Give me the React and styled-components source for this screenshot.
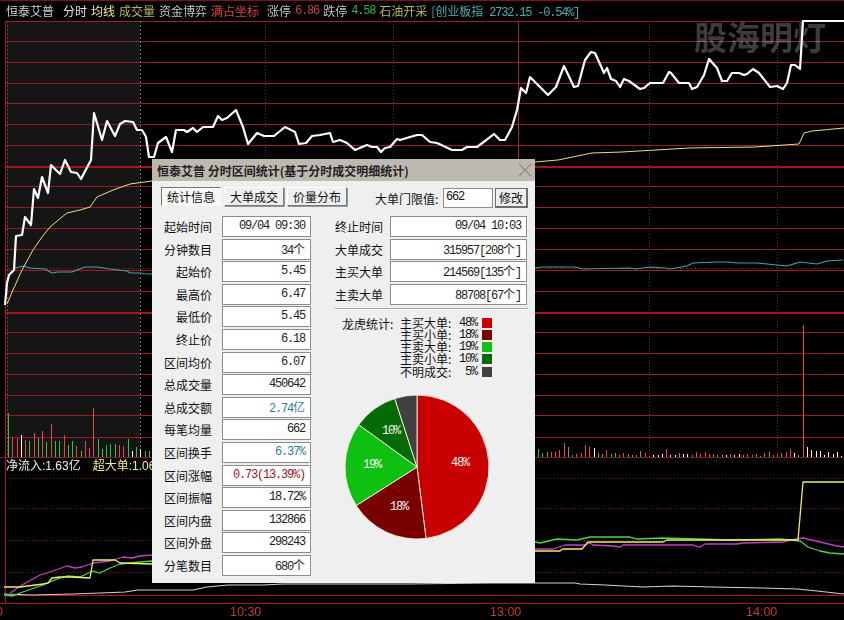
import React from 'react';
import styled, { createGlobalStyle } from 'styled-components';

const CJK = `"Noto Sans CJK SC", "Liberation Sans", sans-serif`;
const MONO = `"Liberation Mono", "Noto Sans CJK SC", monospace`;

const GlobalStyle = createGlobalStyle`
  html, body {
    margin: 0;
    background: #000;
    overflow: hidden;
  }
`;

const Screen = styled.div`
  position: relative;
  width: 844px;
  height: 620px;
  background: #000;
  font-family: ${CJK};
  font-size: 12px;
  overflow: hidden;
`;

const TopBar = styled.div`
  display: flex;
  align-items: center;
  gap: 4px;
  height: 19px;
  padding-left: 6px;
  border-top: 1px solid #7e1418;
  white-space: nowrap;
`;

const TopItem = styled.span`
  color: ${props => props.$color};
  margin-left: ${props => props.$shift || 0}px;
`;

const TopNum = styled(TopItem)`
  font-family: ${MONO};
  letter-spacing: -1.2px;
`;

const Chart = styled.svg`
  display: block;
`;

const AxisRow = styled.div`
  display: grid;
  grid-template-columns: 230px 260px 256px 1fr;
  height: 16px;
  line-height: 16px;
`;

const AxisLabel = styled.span`
  color: #c23a3c;
  font-family: "Liberation Sans", sans-serif;
  font-size: 12.5px;
  margin-left: ${props => props.$shift || 0}px;
`;

const Legend = styled.div`
  position: absolute;
  left: 6px;
  top: 459px;
  display: flex;
  gap: 12px;
  line-height: 15px;
`;

const LegendItem = styled.span`
  color: ${props => props.$color};
  font-family: "Liberation Sans", "Noto Sans CJK SC", sans-serif;
  font-size: 12px;
`;

const Watermark = styled.div`
  position: absolute;
  left: 694px;
  top: 13px;
  color: #3c3c3c;
  font-weight: 700;
  font-size: 33px;
  line-height: 46px;
  white-space: nowrap;
  mix-blend-mode: screen;
`;

const Dialog = styled.div`
  position: absolute;
  left: 152px;
  top: 159px;
  width: 383px;
  height: 424px;
  background: #efefef;
  color: #111;
`;

const TitleBar = styled.div`
  display: flex;
  align-items: center;
  justify-content: space-between;
  height: 22px;
  padding: 0 3px 0 5px;
  background: #bdb8b0;
  color: #222;
  font-weight: 700;
  font-size: 12px;
`;

const TabRow = styled.div`
  display: flex;
  align-items: center;
  height: 22px;
  margin: 6px 7px 7px 9px;
`;

const Tabs = styled.div`
  display: flex;
  gap: 3px;
  margin-bottom: 3px;
`;

const Tab = styled.div`
  width: 60px;
  height: 19px;
  line-height: 18px;
  text-align: center;
  box-sizing: border-box;
  background: ${props => (props.$active ? '#f8f8f8' : '#efefef')};
  border: 1px solid #efefef;
  border-color: ${props =>
    props.$active
      ? '#777 #f8f8f8 #f8f8f8 #777'
      : '#fff #777 #777 #fff'};
  box-shadow: ${props => (props.$active ? 'none' : '1px 1px 0 #999')};
`;

const Threshold = styled.div`
  display: flex;
  align-items: center;
  margin-left: auto;
`;

const ThresholdLabel = styled.span`
  width: 68px;
  white-space: nowrap;
`;

const ThresholdInput = styled.div`
  width: 50px;
  height: 20px;
  box-sizing: border-box;
  border: 1px solid #8c8c8c;
  background: #fff;
  font-family: ${MONO};
  letter-spacing: -1.2px;
  line-height: 17px;
  padding-left: 2px;
`;

const ThresholdButton = styled.div`
  width: 33px;
  height: 20px;
  box-sizing: border-box;
  margin-left: 2px;
  border: 1px solid #6d6d6d;
  border-width: 1px 2px 2px 1px;
  line-height: 17px;
  text-align: center;
`;

const Columns = styled.div`
  display: grid;
  grid-template-columns: 159px 1fr;
  column-gap: 24px;
  padding-right: 7px;
`;

const StatGrid = styled.div`
  display: grid;
  grid-template-columns: ${props => props.$label}px ${props => props.$field}px;
  column-gap: ${props => props.$gap}px;
  grid-auto-rows: 21px;
  row-gap: 1.6px;
  align-items: center;
`;

const StatLabel = styled.div`
  text-align: right;
  white-space: nowrap;
  line-height: 19px;
`;

const StatValue = styled.div`
  height: 21px;
  box-sizing: border-box;
  border: 1px solid #8c8c8c;
  background: #fff;
  padding-right: 5px;
  text-align: right;
  line-height: 18px;
  font-family: ${MONO};
  letter-spacing: -1.2px;
  color: ${props => props.$color || '#222'};
  white-space: nowrap;
`;

const Unit = styled.span`
  font-family: ${CJK};
  letter-spacing: 0;
`;

const Divider = styled.div`
  height: 1px;
  margin: 3px 0 0;
  background: #a5a5a5;
  border-bottom: 1px solid #fff;
`;

const Dragon = styled.div`
  display: grid;
  grid-template-columns: 58px 1fr;
  margin: 7px 0 0 7px;
`;

const DragonTitle = styled.div`
  line-height: 13px;
`;

const DragonRows = styled.div`
  display: grid;
  grid-auto-rows: 12.2px;
`;

const DragonRow = styled.div`
  display: grid;
  grid-template-columns: 54px 24px 14px;
  align-items: center;
  line-height: 12px;
  white-space: nowrap;
`;

const DragonPct = styled.span`
  text-align: right;
  font-family: ${MONO};
  letter-spacing: -1.2px;
  padding-right: 1px;
`;

const Swatch = styled.span`
  width: 10px;
  height: 10px;
  margin-left: 4px;
  background: ${props => props.$color};
`;

const PieWrap = styled.svg`
  display: block;
  margin: 14px 0 0 ${props => props.$left}px;
`;

const PieText = styled.text`
  font-family: ${MONO};
  font-size: 12px;
  letter-spacing: -1.2px;
  fill: #f4f4f4;
  text-anchor: middle;
  dominant-baseline: middle;
`;

const priceLine = '5,305 7,283 9,275 14,270 16,236 22,235 25,217 31,225 34,189 38,198 42,177 48,193 51,165 60,174 65,160 71,172 77,173 81,179 91,160 94,113 102,140 107,121 115,136 120,124 125,121 133,122 137,130 142,130 146,137 149,157 154,157 158,143 166,137 172,152 176,130 184,130 187,132 193,128 197,132 203,127 213,127 218,116 222,120 227,118 236,110 243,127 248,144 257,133 264,136 274,136 285,127 295,132 299,144 306,143 312,136 320,135 330,133 333,142 340,140 347,143 355,150 367,145 372,147 377,147 381,152 385,148 390,147 397,139 400,140 410,137 417,135 422,135 430,142 437,143 452,150 462,150 467,147 477,147 485,141 494,134 500,140 505,140 512,127 517,110 521,88 526,93 530,77 548,95 556,87 564,66 574,87 578,86 585,60 591,52 595,53 604,73 607,68 611,79 616,81 620,87 624,79 629,81 640,89 644,88 650,83 663,83 669,72 671,73 679,83 689,83 692,89 697,87 704,75 709,59 717,68 722,81 727,81 732,73 739,73 744,75 747,74 753,69 759,73 770,87 777,86 783,89 787,83 791,65 795,65 800,69 803,21 844,21';
const avgLine = '7,304 13,290 22,270 33,250 42,237 50,227 62,217 67,213 80,210 90,207 97,197 113,190 130,184 152,181 350,170 535,162 558,160 592,153 622,152 689,148 755,147 799,144 804,133 812,131 844,128';
const indexLine = '15,268 23,266 30,268 45,269 52,273 58,272 72,272 85,267 97,267 110,269 127,271 130,273 140,273 147,274 152,274 535,268 542,267 575,267 583,269 630,268 635,269 650,267 665,268 670,269 687,266 693,263 717,262 728,262 738,263 757,263 787,266 800,262 817,264 827,261 843,260';
const magentaLine = '10,593 22,585 40,575 50,572 67,566 75,568 82,567 93,563 110,561 123,557 132,558 140,556 152,555 535,549 553,549 565,545 585,545 590,543 593,545 613,546 620,547 623,545 693,545 700,547 705,544 737,544 743,543 783,542 790,540 803,538 820,542 837,546 844,547';
const greenLine = '4,595 13,596 20,593 43,585 57,579 67,576 80,577 93,571 100,573 110,568 120,564 140,562 152,561 535,542 540,543 557,539 577,540 590,537 610,537 630,537 637,539 663,538 697,539 730,540 780,539 800,541 808,547 820,551 830,553 844,554';
const yellowLine = '4,587 20,587 43,584 48,583 52,578 60,577 72,577 90,578 93,560 115,560 120,563 152,564 535,551 560,551 563,549 582,549 588,542 663,542 667,540 798,540 803,482 844,482';
const paleLine = '4,594 33,595 73,594 100,593 125,592 138,590 160,590 193,590 207,587 228,585 263,585 283,584 318,584 408,584 490,583 530,583 575,583 580,584 605,585 643,587 673,586 713,587 763,588 797,589 817,591 844,594';

const leftBars = [['g', 413], ['r', 437], ['r', 438], ['w', 435], ['r', 440], ['g', 441], ['r', 433], ['g', 438], ['r', 431], ['g', 442], ['r', 424], ['g', 441], ['g', 441], ['r', 435], ['g', 445], ['g', 441], ['r', 446], ['g', 451], ['r', 441], ['r', 448], ['r', 408], ['g', 439], ['g', 449], ['g', 445], ['g', 444], ['g', 444], ['r', 445], ['r', 446], ['g', 439], ['w', 451], ['g', 447], ['w', 449], ['g', 451], ['g', 451]];
const rightBars = [['g', 449], ['g', 453], ['g', 452], ['r', 452], ['r', 452], ['r', 450], ['r', 443], ['g', 447], ['g', 455], ['r', 454], ['r', 453], ['r', 445], ['r', 447], ['w', 448], ['g', 453], ['g', 454], ['r', 450], ['g', 454], ['g', 453], ['g', 455], ['r', 453], ['g', 454], ['g', 455], ['g', 455], ['g', 451], ['r', 453], ['r', 456], ['w', 455], ['w', 455], ['w', 454], ['r', 449], ['w', 455], ['w', 455], ['g', 453], ['w', 454], ['w', 454], ['g', 455], ['r', 452], ['r', 454], ['r', 452], ['r', 454], ['g', 454], ['g', 455], ['g', 455], ['w', 455], ['r', 454], ['w', 455], ['w', 454], ['r', 455], ['r', 454], ['r', 455], ['g', 454], ['g', 456], ['g', 453], ['g', 452], ['r', 455], ['r', 454], ['g', 453], ['r', 452], ['r', 449], ['w', 453], ['g', 455], ['r', 325], ['w', 447], ['w', 450], ['w', 451], ['w', 451], ['w', 455], ['w', 452], ['w', 454], ['w', 452], ['w', 456]];

const barColors = { r: '#ec4448', g: '#34c048', w: '#ffffff' };

const Bars = ({ data, start }) =>
  data.map(([c, top], i) => {
    const x = Math.round(start + i * 4.27) + 0.5;
    return <line key={i} x1={x} x2={x} y1={top} y2={457} stroke={barColors[c]} />;
  });

const hLines = [41, 62, 83, 103, 124, 145, 186, 207, 228, 249, 270, 291, 332, 353, 374, 395, 415, 437];
const vDotted = [265, 393, 649, 777];
const lowDotted = [478, 508, 540, 572];

const ChartArea = () => (
  <Chart width="844" height="584" viewBox="0 20 844 584">
    <rect x="7" y="22" width="133" height="436" fill="#151515" />
    <g shapeRendering="crispEdges">
      <line x1="5" x2="844" y1="21.5" y2="21.5" stroke="#98202a" />
      {hLines.map(y => (
        <line key={y} x1="5" x2="844" y1={y + 0.5} y2={y + 0.5} stroke="#961e24" />
      ))}
      <line x1="5" x2="844" y1="167" y2="167" stroke="#a81518" strokeWidth="2" />
      <line x1="5" x2="844" y1="313" y2="313" stroke="#a81518" strokeWidth="2" />
      <line x1="5" x2="844" y1="268.5" y2="268.5" stroke="#a81518" strokeDasharray="1 2" />
      <line x1="0" x2="844" y1="457.5" y2="457.5" stroke="#8a1c20" />
      {lowDotted.map(y => (
        <line key={y} x1="5" x2="844" y1={y + 0.5} y2={y + 0.5} stroke="#821a1c" strokeDasharray="1 2" />
      ))}
      <line x1="5" x2="844" y1="595.5" y2="595.5" stroke="#a01a1e" />
      <line x1="0" x2="844" y1="603.5" y2="603.5" stroke="#a01a1e" />
      <line x1="5.5" x2="5.5" y1="21" y2="604" stroke="#a01a1e" />
      <line x1="7.5" x2="7.5" y1="21" y2="457" stroke="#8c3a3c" strokeDasharray="2 2" />
      <line x1="140.5" x2="140.5" y1="21" y2="457" stroke="#7c6a6a" strokeDasharray="2 2" />
      {vDotted.map(x => (
        <line key={x} x1={x + 0.5} x2={x + 0.5} y1="21" y2="457" stroke="#821a1c" strokeDasharray="1 2" />
      ))}
      <line x1="518.5" x2="518.5" y1="21" y2="457" stroke="#a5282c" />
      <Bars data={leftBars} start={8} />
      <Bars data={rightBars} start={538} />
    </g>
    <g fill="none" strokeLinejoin="round">
      <polyline points={indexLine} stroke="#3fa6a6" strokeWidth="1.1" />
      <polyline points={avgLine} stroke="#e8e07a" strokeWidth="1" />
      <polyline points={paleLine} stroke="#d8cfc8" strokeWidth="1.2" />
      <polyline points={magentaLine} stroke="#c040c0" strokeWidth="1.3" />
      <polyline points={greenLine} stroke="#48d848" strokeWidth="1.3" />
      <polyline points={yellowLine} stroke="#eeee70" strokeWidth="1.3" />
      <polyline points={priceLine} stroke="#ffffff" strokeWidth="2.2" />
    </g>
  </Chart>
);

const pieData = [
  { name: '主买大单', pct: 48, color: '#c80000', text: [43, -4] },
  { name: '主买小单', pct: 18, color: '#7a0000', text: [-18, 40] },
  { name: '主卖大单', pct: 19, color: '#10c010', text: [-45, -2] },
  { name: '主卖小单', pct: 10, color: '#066a06', text: [-26, -36] },
  { name: '不明成交', pct: 5, color: '#404040' },
];

const PIE_R = 72;
const polar = turn => {
  const a = turn * 2 * Math.PI;
  return [PIE_R * Math.sin(a), -PIE_R * Math.cos(a)];
};

const Pie = () => {
  let turn = 0;
  return (
    <PieWrap width="150" height="150" viewBox="-75 -75 150 150" $left={7}>
      {pieData.map(item => {
        const [x1, y1] = polar(turn);
        turn += item.pct / 100;
        const [x2, y2] = polar(turn);
        const large = item.pct > 50 ? 1 : 0;
        return (
          <path
            key={item.name}
            d={`M0 0 L${x1} ${y1} A${PIE_R} ${PIE_R} 0 ${large} 1 ${x2} ${y2} Z`}
            fill={item.color}
            stroke="#f4f4d8"
            strokeWidth="0.9"
          />
        );
      })}
      {pieData.filter(item => item.text).map(item => (
        <PieText key={item.name} x={item.text[0]} y={item.text[1]}>
          {item.pct}%
        </PieText>
      ))}
    </PieWrap>
  );
};

const withUnit = text => {
  const parts = text.split(/([个亿])/);
  return parts.map((part, i) => (/[个亿]/.test(part) ? <Unit key={i}>{part}</Unit> : part));
};

const TEAL = '#2a7f9c';
const RED = '#a8102a';

const leftStats = [
  ['起始时间', '09/04 09:30'],
  ['分钟数目', '34个'],
  ['起始价', '5.45'],
  ['最高价', '6.47'],
  ['最低价', '5.45'],
  ['终止价', '6.18'],
  ['区间均价', '6.07'],
  ['总成交量', '450642'],
  ['总成交额', '2.74亿', TEAL],
  ['每笔均量', '662'],
  ['区间换手', '6.37%', TEAL],
  ['区间涨幅', '0.73(13.39%)', RED],
  ['区间振幅', '18.72%'],
  ['区间内盘', '132866'],
  ['区间外盘', '298243'],
  ['分笔数目', '680个'],
];

const rightStats = [
  ['终止时间', '09/04 10:03'],
  ['大单成交', '315957[208个]'],
  ['主买大单', '214569[135个]'],
  ['主卖大单', '88708[67个]'],
];

const StatList = ({ rows, label, field, gap }) => (
  <StatGrid $label={label} $field={field} $gap={gap}>
    {rows.map(([name, value, color]) => (
      <React.Fragment key={name}>
        <StatLabel>{name}</StatLabel>
        <StatValue $color={color}>{withUnit(value)}</StatValue>
      </React.Fragment>
    ))}
  </StatGrid>
);

const CloseIcon = () => (
  <svg width="14" height="14" viewBox="0 0 14 14">
    <path d="M1 1 L13 13 M13 1 L1 13" stroke="#8e8a84" strokeWidth="1.1" fill="none" />
  </svg>
);

export default function App() {
  return (
    <Screen>
      <GlobalStyle />
      <TopBar>
        <TopItem $color="#cfcfcf">恒泰艾普</TopItem>
        <TopItem $color="#e2e2e2" $shift={5}>分时</TopItem>
        <TopItem $color="#ecec8a">均线</TopItem>
        <TopItem $color="#b4b464">成交量</TopItem>
        <TopItem $color="#c4c4c4">资金博弈</TopItem>
        <TopItem $color="#e04444">满占坐标</TopItem>
        <TopItem $color="#c0c0c0" $shift={4}>涨停</TopItem>
        <TopNum $color="#c8403f">6.86</TopNum>
        <TopItem $color="#c0c0c0">跌停</TopItem>
        <TopNum $color="#38b838">4.58</TopNum>
        <TopItem $color="#b8b864">石油开采</TopItem>
        <TopNum $color="#48b0b0">
          <Unit>[创业板指</Unit> 2732.15 -0.54%]
        </TopNum>
      </TopBar>
      <ChartArea />
      <AxisRow>
        <AxisLabel $shift={-4}>0</AxisLabel>
        <AxisLabel>10:30</AxisLabel>
        <AxisLabel>13:00</AxisLabel>
        <AxisLabel>14:00</AxisLabel>
      </AxisRow>

      <Legend>
        <LegendItem $color="#f0f0f0">净流入:1.63亿</LegendItem>
        <LegendItem $color="#f0f08a">超大单:1.06</LegendItem>
      </Legend>

      <Watermark>股海明灯</Watermark>

      <Dialog>
        <TitleBar>
          恒泰艾普 分时区间统计(基于分时成交明细统计)
          <CloseIcon />
        </TitleBar>
        <TabRow>
          <Tabs>
            <Tab $active>统计信息</Tab>
            <Tab>大单成交</Tab>
            <Tab>价量分布</Tab>
          </Tabs>
          <Threshold>
            <ThresholdLabel>大单门限值:</ThresholdLabel>
            <ThresholdInput>662</ThresholdInput>
            <ThresholdButton>修改</ThresholdButton>
          </Threshold>
        </TabRow>
        <Columns>
          <StatList rows={leftStats} label={60} field={89} gap={10} />
          <div>
            <StatList rows={rightStats} label={47} field={137} gap={8} />
            <Divider />
            <Dragon>
              <DragonTitle>龙虎统计:</DragonTitle>
              <DragonRows>
                {pieData.map(item => (
                  <DragonRow key={item.name}>
                    <span>{item.name}:</span>
                    <DragonPct>{item.pct}%</DragonPct>
                    <Swatch $color={item.color} />
                  </DragonRow>
                ))}
              </DragonRows>
            </Dragon>
            <Pie />
          </div>
        </Columns>
      </Dialog>
    </Screen>
  );
}
